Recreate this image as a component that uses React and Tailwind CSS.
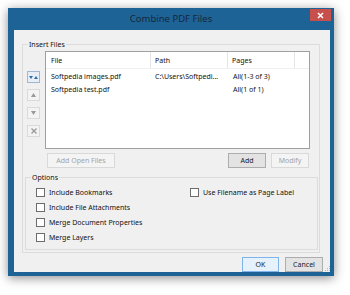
import React from "react";

const files = [
  { name: "Softpedia images.pdf", path: "C:\\Users\\Softpedi...", pages: "All(1-3 of 3)" },
  { name: "Softpedia test.pdf", path: "", pages: "All(1 of 1)" },
];

function SideButton({ active, children }) {
  return (
    <div
      className={
        "w-[13px] h-[12px] flex items-center justify-center border " +
        (active ? "border-[#9fb7d0] bg-[#e8eef5]" : "border-[#dadada] bg-[#f3f3f3]")
      }
    >
      {children}
    </div>
  );
}

function Button({ label, disabled, primary, width }) {
  return (
    <div
      className={
        "h-[15px] flex items-center justify-center border " +
        width +
        " " +
        (disabled
          ? "border-[#d9d9d9] bg-[#f4f4f4] text-[#a3a3a3]"
          : primary
          ? "border-[#7eb4ea] bg-[#e5f1fb] text-[#1a1a1a]"
          : "border-[#adadad] bg-[#e3e3e3] text-[#1a1a1a]")
      }
    >
      {label}
    </div>
  );
}

function Check({ label }) {
  return (
    <div className="flex items-center h-[15px]">
      <div className="w-[9px] h-[9px] border border-[#6d6d6d] bg-white" />
      <span className="ml-[4px]">{label}</span>
    </div>
  );
}

export default function App() {
  return (
    <div className="w-[350px] h-[295px] bg-white pt-[8px] pl-[8px] font-['Noto_Sans',sans-serif] text-[7px] text-[#111] leading-none">
      {/* window */}
      <div className="w-[326px] h-[268px] bg-[#1e6396] shadow-[0_2px_10px_rgba(0,0,0,0.45)] flex flex-col">
        {/* title bar */}
        <div className="h-[22px] grid grid-cols-[1fr_auto_1fr]">
          <div />
          <div className="flex items-center text-[9.5px] text-[#16283a]">Combine PDF Files</div>
          <div className="flex justify-end">
            <div className="mt-[1px] mr-[3px] w-[21px] h-[12px] bg-[#c7504d] flex items-center justify-center">
              <svg width="7" height="7" viewBox="0 0 7 7">
                <path d="M1 1L6 6M6 1L1 6" stroke="white" strokeWidth="1.5" />
              </svg>
            </div>
          </div>
        </div>

        {/* client */}
        <div className="ml-[6px] mr-[4px] h-[242px] bg-[#f0f0f0] pt-[14px] pl-[8px] flex flex-col">
          {/* Insert Files group */}
          <div className="relative w-[298px] h-[209px] border border-[#dcdcdc] pt-[6px]">
            <span className="absolute left-[5px] top-[-4px] px-[1px] bg-[#f0f0f0]">Insert Files</span>

            <div className="flex">
              {/* move buttons */}
              <div className="ml-[4px] mt-[20px] flex flex-col gap-[6px]">
                <SideButton active>
                  <svg width="9" height="5" viewBox="0 0 9 5">
                    <path d="M0 1H4L2 4Z" fill="#2f6fb0" />
                    <path d="M5 4H9L7 1Z" fill="#2f6fb0" />
                  </svg>
                </SideButton>
                <SideButton>
                  <svg width="5" height="4" viewBox="0 0 5 4">
                    <path d="M0 4H5L2.5 0Z" fill="#9a9a9a" />
                  </svg>
                </SideButton>
                <SideButton>
                  <svg width="5" height="4" viewBox="0 0 5 4">
                    <path d="M0 0H5L2.5 4Z" fill="#9a9a9a" />
                  </svg>
                </SideButton>
                <SideButton>
                  <svg width="6" height="6" viewBox="0 0 6 6">
                    <path d="M0.5 0.5L5.5 5.5M5.5 0.5L0.5 5.5" stroke="#9a9a9a" strokeWidth="1.3" />
                  </svg>
                </SideButton>
              </div>

              {/* list view */}
              <div className="ml-[5px] w-[265px] h-[98px] border border-[#a0a0a0] bg-white">
                <div className="h-[17px] flex border-b border-[#f0f0f0]">
                  <div className="w-[105px] border-r border-[#e5e5e5] pl-[5px] flex items-center">File</div>
                  <div className="w-[77px] border-r border-[#e5e5e5] pl-[4px] flex items-center">Path</div>
                  <div className="w-[67px] border-r border-[#e5e5e5] pl-[4px] flex items-center">Pages</div>
                  <div className="flex-1" />
                </div>
                <div className="pt-[1px]">
                  {files.map((f) => (
                    <div key={f.name} className="h-[13px] flex items-center">
                      <div className="w-[105px] pl-[5px]">{f.name}</div>
                      <div className="w-[77px] pl-[4px]">{f.path}</div>
                      <div className="w-[67px] pl-[5px]">{f.pages}</div>
                    </div>
                  ))}
                </div>
              </div>
            </div>

            {/* buttons row */}
            <div className="mt-[4px] flex">
              <div className="ml-[24px]">
                <Button label="Add Open Files" disabled width="w-[68px]" />
              </div>
              <div className="ml-[113px]">
                <Button label="Add" width="w-[38px]" />
              </div>
              <div className="ml-[5px]">
                <Button label="Modify" disabled width="w-[38px]" />
              </div>
            </div>

            {/* Options group */}
            <div className="relative ml-[2px] mt-[9px] w-[293px] h-[73px] border border-[#dcdcdc] pt-[7px] pl-[10px] flex">
              <span className="absolute left-[5px] top-[-4px] px-[1px] bg-[#f0f0f0]">Options</span>
              <div className="w-[154px] flex flex-col">
                <Check label="Include Bookmarks" />
                <Check label="Include File Attachments" />
                <Check label="Merge Document Properties" />
                <Check label="Merge Layers" />
              </div>
              <div className="flex flex-col">
                <Check label="Use Filename as Page Label" />
              </div>
            </div>
          </div>

          {/* OK / Cancel */}
          <div className="mt-[4px] flex items-end">
            <div className="ml-[220px]">
              <Button label="OK" primary width="w-[37px]" />
            </div>
            <div className="ml-[6px]">
              <Button label="Cancel" width="w-[38px]" />
            </div>
            <svg className="ml-[2px] mb-[1px]" width="5" height="5" viewBox="0 0 5 5">
              <rect x="4" y="0" width="1" height="1" fill="#b5b5b5" />
              <rect x="2" y="2" width="1" height="1" fill="#b5b5b5" />
              <rect x="4" y="2" width="1" height="1" fill="#b5b5b5" />
              <rect x="0" y="4" width="1" height="1" fill="#b5b5b5" />
              <rect x="2" y="4" width="1" height="1" fill="#b5b5b5" />
              <rect x="4" y="4" width="1" height="1" fill="#b5b5b5" />
            </svg>
          </div>
        </div>
      </div>
    </div>
  );
}
